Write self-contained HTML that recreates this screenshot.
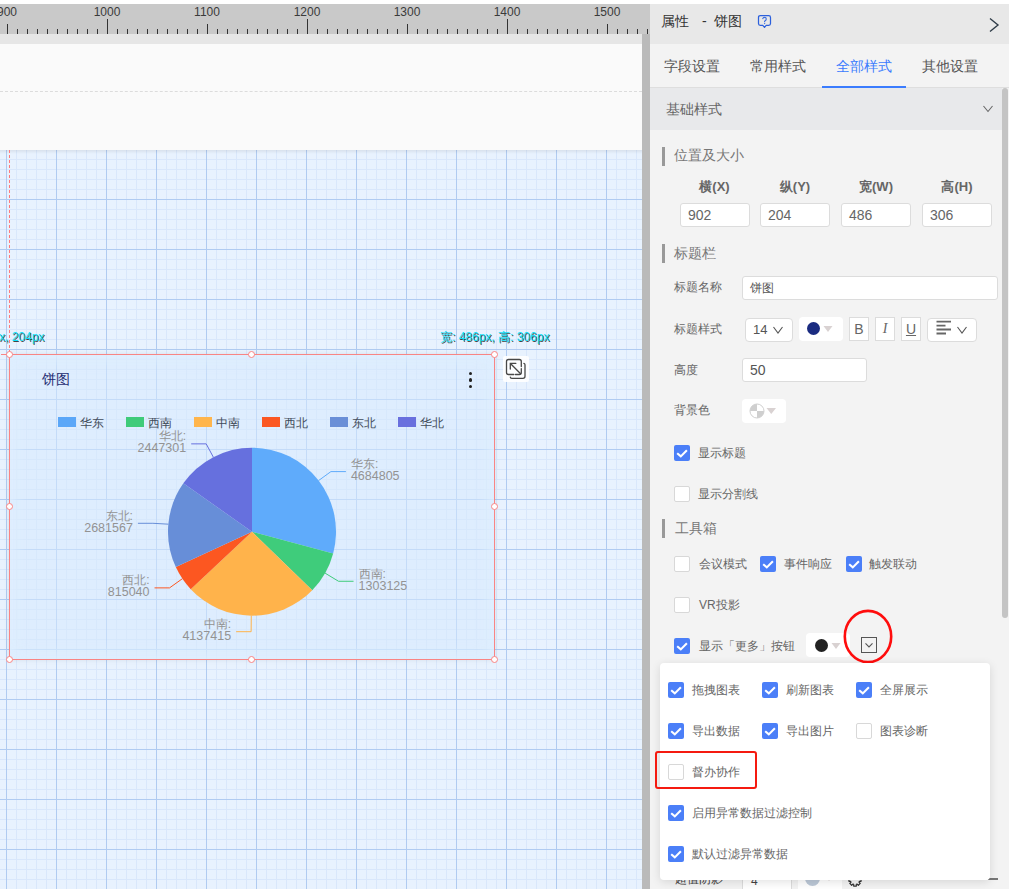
<!DOCTYPE html>
<html><head><meta charset="utf-8">
<style>
*{margin:0;padding:0;box-sizing:border-box}
html,body{width:1009px;height:889px;overflow:hidden;background:#fff;font-family:"Liberation Sans",sans-serif}
.a{position:absolute}
.tk{position:absolute;width:1px;background:#333}
.rl{position:absolute;top:5px;width:60px;text-align:center;font-size:12px;line-height:14px;color:#3a3a3a}
.grid{position:absolute;left:0;top:150px;width:642px;height:739px;background-color:#e8f2fe;
 background-image:
  linear-gradient(to right, #b0cbf1 1px, transparent 1px),
  linear-gradient(to bottom, #b0cbf1 1px, transparent 1px),
  linear-gradient(to right, #d9e7fb 1px, transparent 1px),
  linear-gradient(to bottom, #d9e7fb 1px, transparent 1px);
 background-size:50px 50px,50px 50px,10px 10px,10px 10px;
 background-position:6px -1px,6px -1px,6px -1px,6px -1px}
.pl{position:absolute;font-size:12.5px;line-height:12px;color:#939393;white-space:nowrap}
.lg{position:absolute;top:417px;width:18px;height:10px}
.lt{position:absolute;top:414.5px;font-size:12px;line-height:16px;color:#414b5a}
.cyan{position:absolute;font-size:12px;line-height:14px;color:#12e0fa;text-shadow:1px 1px 0.5px rgba(20,20,20,0.8);white-space:nowrap}
.hd{position:absolute;width:7px;height:7px;border-radius:50%;background:#fff;border:1px solid #f98484}
/* right panel */
.t14{position:absolute;font-size:14px;line-height:16px;color:#555;white-space:nowrap}
.t12{position:absolute;font-size:12px;line-height:14px;color:#666;white-space:nowrap}
.sec{position:absolute;left:662px;width:3px;height:19px;background:#999}
.inp{position:absolute;background:#fff;border:1px solid #dcdcdc;border-radius:3px}
.cb{position:absolute;width:16px;height:16px;border-radius:2px;background:#4b7ff8}
.cb svg{position:absolute;left:0;top:0}
.ucb{position:absolute;width:16px;height:16px;border-radius:2px;background:#fff;border:1px solid #d8d8d8}
</style></head><body>
<!-- top white strip -->
<div class="a" style="left:0;top:0;width:1009px;height:4px;background:#fff"></div>
<!-- ruler -->
<div class="a" style="left:0;top:4px;width:650px;height:30px;background:#c9c9c9;overflow:hidden">
<div class="a" style="left:0;top:-4px;width:650px;height:34px">
<div class="tk" style="left:7px;top:24px;height:10px"></div><div class="tk" style="left:17px;top:29px;height:5px"></div><div class="tk" style="left:27px;top:29px;height:5px"></div><div class="tk" style="left:37px;top:29px;height:5px"></div><div class="tk" style="left:47px;top:29px;height:5px"></div><div class="tk" style="left:57px;top:29px;height:5px"></div><div class="tk" style="left:67px;top:29px;height:5px"></div><div class="tk" style="left:77px;top:29px;height:5px"></div><div class="tk" style="left:87px;top:29px;height:5px"></div><div class="tk" style="left:97px;top:29px;height:5px"></div><div class="tk" style="left:107px;top:19px;height:15px"></div><div class="tk" style="left:117px;top:29px;height:5px"></div><div class="tk" style="left:127px;top:29px;height:5px"></div><div class="tk" style="left:137px;top:29px;height:5px"></div><div class="tk" style="left:147px;top:29px;height:5px"></div><div class="tk" style="left:157px;top:29px;height:5px"></div><div class="tk" style="left:167px;top:29px;height:5px"></div><div class="tk" style="left:177px;top:29px;height:5px"></div><div class="tk" style="left:187px;top:29px;height:5px"></div><div class="tk" style="left:197px;top:29px;height:5px"></div><div class="tk" style="left:207px;top:24px;height:10px"></div><div class="tk" style="left:217px;top:29px;height:5px"></div><div class="tk" style="left:227px;top:29px;height:5px"></div><div class="tk" style="left:237px;top:29px;height:5px"></div><div class="tk" style="left:247px;top:29px;height:5px"></div><div class="tk" style="left:257px;top:29px;height:5px"></div><div class="tk" style="left:267px;top:29px;height:5px"></div><div class="tk" style="left:277px;top:29px;height:5px"></div><div class="tk" style="left:287px;top:29px;height:5px"></div><div class="tk" style="left:297px;top:29px;height:5px"></div><div class="tk" style="left:307px;top:19px;height:15px"></div><div class="tk" style="left:317px;top:29px;height:5px"></div><div class="tk" style="left:327px;top:29px;height:5px"></div><div class="tk" style="left:337px;top:29px;height:5px"></div><div class="tk" style="left:347px;top:29px;height:5px"></div><div class="tk" style="left:357px;top:29px;height:5px"></div><div class="tk" style="left:367px;top:29px;height:5px"></div><div class="tk" style="left:377px;top:29px;height:5px"></div><div class="tk" style="left:387px;top:29px;height:5px"></div><div class="tk" style="left:397px;top:29px;height:5px"></div><div class="tk" style="left:407px;top:24px;height:10px"></div><div class="tk" style="left:417px;top:29px;height:5px"></div><div class="tk" style="left:427px;top:29px;height:5px"></div><div class="tk" style="left:437px;top:29px;height:5px"></div><div class="tk" style="left:447px;top:29px;height:5px"></div><div class="tk" style="left:457px;top:29px;height:5px"></div><div class="tk" style="left:467px;top:29px;height:5px"></div><div class="tk" style="left:477px;top:29px;height:5px"></div><div class="tk" style="left:487px;top:29px;height:5px"></div><div class="tk" style="left:497px;top:29px;height:5px"></div><div class="tk" style="left:507px;top:19px;height:15px"></div><div class="tk" style="left:517px;top:29px;height:5px"></div><div class="tk" style="left:527px;top:29px;height:5px"></div><div class="tk" style="left:537px;top:29px;height:5px"></div><div class="tk" style="left:547px;top:29px;height:5px"></div><div class="tk" style="left:557px;top:29px;height:5px"></div><div class="tk" style="left:567px;top:29px;height:5px"></div><div class="tk" style="left:577px;top:29px;height:5px"></div><div class="tk" style="left:587px;top:29px;height:5px"></div><div class="tk" style="left:597px;top:29px;height:5px"></div><div class="tk" style="left:607px;top:24px;height:10px"></div><div class="tk" style="left:617px;top:29px;height:5px"></div><div class="tk" style="left:627px;top:29px;height:5px"></div><div class="tk" style="left:637px;top:29px;height:5px"></div><div class="tk" style="left:647px;top:29px;height:5px"></div>
<div class="rl" style="left:-23px">900</div><div class="rl" style="left:77px">1000</div><div class="rl" style="left:177px">1100</div><div class="rl" style="left:277px">1200</div><div class="rl" style="left:377px">1300</div><div class="rl" style="left:477px">1400</div><div class="rl" style="left:577px">1500</div>
</div></div>
<div class="a" style="left:0;top:34px;width:642px;height:10px;background:#e6e6e6"></div>
<div class="a" style="left:0;top:44px;width:642px;height:106px;background:#fafafa"></div>
<div class="a" style="left:0;top:91px;width:642px;height:0;border-top:1px dashed #dcdcdc"></div>
<!-- grid -->
<div class="grid"></div>
<div class="a" style="left:0;top:150px;width:642px;height:4px;background:linear-gradient(rgba(0,0,0,0.07),rgba(0,0,0,0))"></div>
<!-- red dashed guide -->
<div class="a" style="left:9px;top:150px;width:1px;height:204px;background:repeating-linear-gradient(to bottom,#ff7b7b 0 3px,transparent 3px 5px)"></div>
<!-- chart -->
<div class="a" style="left:10px;top:355px;width:484px;height:304px;background:rgba(214,234,253,0.55);box-shadow:0 0 6px rgba(0,0,0,0.10), inset 0 0 14px 6px rgba(222,238,254,0.9)"></div>
<div class="a" style="left:1px;top:354px;width:494px;height:1px;background:#f98484"></div>
<div class="a" style="left:9px;top:354px;width:1px;height:306px;background:#f98484"></div>
<div class="a" style="left:494px;top:354px;width:1px;height:306px;background:#f98484"></div>
<div class="a" style="left:9px;top:659px;width:486px;height:1px;background:#f98484"></div>
<div class="hd" style="left:6px;top:351px"></div>
<div class="hd" style="left:248px;top:351px"></div>
<div class="hd" style="left:491px;top:351px"></div>
<div class="hd" style="left:6px;top:503px"></div>
<div class="hd" style="left:491px;top:503px"></div>
<div class="hd" style="left:6px;top:656px"></div>
<div class="hd" style="left:248px;top:656px"></div>
<div class="hd" style="left:491px;top:656px"></div>
<div class="cyan" style="left:-1px;top:330px">x, 204px</div>
<div class="cyan" style="left:440px;top:330px">宽: 486px, 高: 306px</div>
<div class="a" style="left:42px;top:371px;font-size:14px;line-height:16px;color:#1e2c72">饼图</div>
<!-- dots -->
<div class="a" style="left:468.6px;top:371.5px;width:3.6px;height:3.6px;border-radius:50%;background:#222"></div>
<div class="a" style="left:468.6px;top:378.2px;width:3.6px;height:3.6px;border-radius:50%;background:#222"></div>
<div class="a" style="left:468.6px;top:384.7px;width:3.6px;height:3.6px;border-radius:50%;background:#222"></div>
<!-- expand icon -->
<div class="a" style="left:503px;top:356px;width:26px;height:26px;background:rgba(255,255,255,0.88);border-radius:2px">
<svg width="26" height="26" viewBox="0 0 26 26" style="position:absolute;left:0;top:0">
<g fill="none" stroke="#484848" stroke-width="1.3" stroke-linecap="round">
<path d="M10.8 18.5 H5.5 Q3.5 18.5 3.5 16.5 V5.5 Q3.5 3.5 5.5 3.5 H16.3 Q18.3 3.5 18.3 5.5 V10.6"/>
<path d="M18.3 12.6 V16.5 Q18.3 18.5 16.3 18.5 H12.4"/>
<path d="M7.4 7.5 L17.6 17.8 M7.3 13 V7.4 H12.8"/>
<path d="M20.9 7.3 Q22 7.5 22 8.8 V20.3 Q22 22.3 20 22.3 H8.8 Q7.4 22.3 7.3 21.1"/>
</g></svg></div>
<!-- legend -->
<div class="lg" style="left:58px;background:#5ba7f8"></div><div class="lt" style="left:80px">华东</div>
<div class="lg" style="left:126px;background:#3fcb7a"></div><div class="lt" style="left:148px">西南</div>
<div class="lg" style="left:194px;background:#ffb54c"></div><div class="lt" style="left:216px">中南</div>
<div class="lg" style="left:262px;background:#fb5722"></div><div class="lt" style="left:284px">西北</div>
<div class="lg" style="left:330px;background:#6a8fd7"></div><div class="lt" style="left:352px">东北</div>
<div class="lg" style="left:398px;background:#6970de"></div><div class="lt" style="left:420px">华北</div>
<svg class="a" style="left:0;top:0" width="642" height="889" viewBox="0 0 642 889">
<path d="M252,531.7 L252.00,447.70 A84,84 0 0 1 333.16,553.38 Z" fill="#5fabfb"/><polyline points="318.62,480.54 330.91,471.60 345.91,471.60" fill="none" stroke="#5fabfb" stroke-width="1"/><path d="M252,531.7 L333.16,553.38 A84,84 0 0 1 312.27,590.21 Z" fill="#3fcc7b"/><polyline points="325.07,573.13 338.56,581.27 353.56,581.27" fill="none" stroke="#3fcc7b" stroke-width="1"/><path d="M252,531.7 L312.27,590.21 A84,84 0 0 1 190.73,589.16 Z" fill="#ffb34b"/><polyline points="251.28,615.70 251.14,631.70 236.14,631.70" fill="none" stroke="#ffb34b" stroke-width="1"/><path d="M252,531.7 L190.73,589.16 A84,84 0 0 1 175.81,567.07 Z" fill="#fc5721"/><polyline points="182.39,578.71 169.54,587.89 154.54,587.89" fill="none" stroke="#fc5721" stroke-width="1"/><path d="M252,531.7 L175.81,567.07 A84,84 0 0 1 183.34,483.31 Z" fill="#678ed8"/><polyline points="168.34,524.18 152.90,523.29 137.90,523.29" fill="none" stroke="#678ed8" stroke-width="1"/><path d="M252,531.7 L183.34,483.31 A84,84 0 0 1 252.00,447.70 Z" fill="#6670de"/><polyline points="213.33,457.13 206.19,443.87 191.19,443.87" fill="none" stroke="#6670de" stroke-width="1"/>
</svg>
<div class="pl" style="left:350.9px;top:457.9px;text-align:left"><span style="font-size:12px">华东:</span><br>4684805</div><div class="pl" style="left:358.6px;top:567.6px;text-align:left"><span style="font-size:12px">西南:</span><br>1303125</div><div class="pl" style="left:151.1px;top:618.0px;width:80px;text-align:right"><span style="font-size:12px">中南:</span><br>4137415</div><div class="pl" style="left:69.5px;top:574.2px;width:80px;text-align:right"><span style="font-size:12px">西北:</span><br>815040</div><div class="pl" style="left:52.9px;top:509.6px;width:80px;text-align:right"><span style="font-size:12px">东北:</span><br>2681567</div><div class="pl" style="left:106.2px;top:430.2px;width:80px;text-align:right"><span style="font-size:12px">华北:</span><br>2447301</div>
<!-- scrollbar canvas -->
<div class="a" style="left:642px;top:34px;width:8px;height:855px;background:#bababa"></div>
<!--RIGHT-->
<div class="a" style="left:650px;top:4px;width:359px;height:40px;background:#e8e8e8"></div>
<div class="t14" style="left:661px;top:13px;color:#333">属性</div>
<div class="t14" style="left:702px;top:13px;color:#333">-</div>
<div class="t14" style="left:714px;top:13px;color:#333">饼图</div>
<svg class="a" style="left:756px;top:14px" width="17" height="16" viewBox="0 0 17 16"><path d="M4.3 1.6 H12.7 Q14.5 1.6 14.5 3.4 V9.6 Q14.5 11.4 12.7 11.4 H10.2 L8.5 13.4 L6.8 11.4 H4.3 Q2.5 11.4 2.5 9.6 V3.4 Q2.5 1.6 4.3 1.6 Z" fill="none" stroke="#2c60dc" stroke-width="1.25" stroke-linejoin="round"/><path d="M6.6 5.1 Q6.8 3.4 8.5 3.4 Q10.3 3.4 10.3 5 Q10.3 6.2 8.6 7.2 V8.3" fill="none" stroke="#3a6de0" stroke-width="1.1"/><circle cx="8.6" cy="9.6" r="0.7" fill="#3a6de0"/></svg>
<svg class="a" style="left:988px;top:17px" width="12" height="16" viewBox="0 0 12 16"><path d="M2 1.5 L10 8 L2 14.5" fill="none" stroke="#2f3c48" stroke-width="1.4"/></svg>
<div class="a" style="left:650px;top:44px;width:359px;height:43px;background:#f3f3f3"></div>
<div class="a" style="left:650px;top:87px;width:359px;height:1px;background:#dedede"></div>
<div class="t14" style="left:664px;top:58px;color:#555">字段设置</div>
<div class="t14" style="left:750px;top:58px;color:#555">常用样式</div>
<div class="t14" style="left:836px;top:58px;color:#3b7cfe">全部样式</div>
<div class="t14" style="left:922px;top:58px;color:#555">其他设置</div>
<div class="a" style="left:822px;top:86px;width:84px;height:2px;background:#3b7cfe"></div>
<div class="a" style="left:650px;top:88px;width:359px;height:801px;background:#f3f3f3"></div>
<div class="a" style="left:650px;top:88px;width:352px;height:42px;background:#e8e9eb"></div>
<div class="t14" style="left:666px;top:101px;color:#666">基础样式</div>
<svg class="a" style="left:982px;top:103px" width="12" height="12" viewBox="0 0 12 12"><path d="M1.5 3 L6 8.5 L10.5 3" fill="none" stroke="#666" stroke-width="1.1"/></svg>
<div class="a" style="left:1002px;top:88px;width:6px;height:530px;background:#c4c4c4;border-radius:3px"></div>
<div class="sec" style="top:147px"></div>
<div class="t14" style="left:674px;top:147px;color:#777">位置及大小</div>
<div class="a" style="left:674.5px;top:179px;width:80px;text-align:center;font-size:13px;line-height:15px;font-weight:bold;color:#666">横(X)</div>
<div class="a" style="left:755px;top:179px;width:80px;text-align:center;font-size:13px;line-height:15px;font-weight:bold;color:#666">纵(Y)</div>
<div class="a" style="left:836px;top:179px;width:80px;text-align:center;font-size:13px;line-height:15px;font-weight:bold;color:#666">宽(W)</div>
<div class="a" style="left:917px;top:179px;width:80px;text-align:center;font-size:13px;line-height:15px;font-weight:bold;color:#666">高(H)</div>
<div class="inp" style="left:680px;top:203px;width:70px;height:24px"></div>
<div class="t14" style="left:688px;top:207px;color:#666">902</div>
<div class="inp" style="left:760px;top:203px;width:70px;height:24px"></div>
<div class="t14" style="left:768px;top:207px;color:#666">204</div>
<div class="inp" style="left:841px;top:203px;width:70px;height:24px"></div>
<div class="t14" style="left:849px;top:207px;color:#666">486</div>
<div class="inp" style="left:922px;top:203px;width:70px;height:24px"></div>
<div class="t14" style="left:930px;top:207px;color:#666">306</div>
<div class="sec" style="top:244px"></div>
<div class="t14" style="left:674px;top:245px;color:#777">标题栏</div>
<div class="t12" style="left:674px;top:280px">标题名称</div>
<div class="inp" style="left:742px;top:276px;width:256px;height:24px"></div>
<div class="t12" style="left:750px;top:281px;color:#555">饼图</div>
<div class="t12" style="left:674px;top:322px">标题样式</div>
<div class="inp" style="left:745px;top:318px;width:48px;height:24px;border-radius:4px"></div>
<div class="a" style="left:753px;top:322px;font-size:13px;line-height:15px;color:#555">14</div>
<svg class="a" style="left:772px;top:324px" width="12" height="12" viewBox="0 0 12 12"><path d="M1.5 3 L6 9 L10.5 3" fill="none" stroke="#555" stroke-width="1.1"/></svg>
<div class="a" style="left:799px;top:317px;width:44px;height:24px;background:#fff;border-radius:4px"></div>
<div class="a" style="left:807px;top:322px;width:13px;height:13px;border-radius:50%;background:#1a2b80"></div>
<svg class="a" style="left:823px;top:325px" width="10" height="8" viewBox="0 0 10 8"><path d="M0.5 1 L9.5 1 L5 7 Z" fill="#d9d2d2"/></svg>
<div class="a" style="left:849px;top:317px;width:20px;height:24px;background:#fff;border:1px solid #dcdcdc"></div>
<div class="a" style="left:849px;top:321px;width:20px;text-align:center;font-size:14px;line-height:16px;color:#666;font-weight:normal">B</div>
<div class="a" style="left:875px;top:317px;width:20px;height:24px;background:#fff;border:1px solid #dcdcdc"></div>
<div class="a" style="left:875px;top:321px;width:20px;text-align:center;font-size:14px;line-height:16px;color:#666;font-style:italic;font-family:Liberation Serif,serif">I</div>
<div class="a" style="left:901px;top:317px;width:20px;height:24px;background:#fff;border:1px solid #dcdcdc"></div>
<div class="a" style="left:901px;top:321px;width:20px;text-align:center;font-size:14px;line-height:16px;color:#666;text-decoration:underline">U</div>
<div class="inp" style="left:927px;top:318px;width:50px;height:24px;border-radius:4px"></div>
<svg class="a" style="left:936px;top:320px" width="16" height="16" viewBox="0 0 16 16"><path d="M0.5 1.7 H15 M0.5 5.6 H9.5 M0.5 9.5 H15 M0.5 13.5 H10" fill="none" stroke="#666" stroke-width="1.8"/></svg>
<svg class="a" style="left:956px;top:324px" width="12" height="12" viewBox="0 0 12 12"><path d="M1.5 3 L6 9 L10.5 3" fill="none" stroke="#555" stroke-width="1.1"/></svg>
<div class="t12" style="left:674px;top:363px">高度</div>
<div class="inp" style="left:742px;top:358px;width:125px;height:24px"></div>
<div class="t14" style="left:750px;top:362px;color:#555">50</div>
<div class="t12" style="left:674px;top:403px">背景色</div>
<div class="a" style="left:742px;top:399px;width:44px;height:24px;background:#fff;border-radius:4px"></div>
<svg class="a" style="left:748.5px;top:403px" width="16" height="16" viewBox="0 0 16 16"><circle cx="8" cy="8" r="7" fill="#fff" stroke="#d0d0d0" stroke-width="1"/><path d="M8 8 V1 A7 7 0 0 0 1 8 Z M8 8 V15 A7 7 0 0 0 15 8 Z" fill="#cfcfcf"/></svg>
<svg class="a" style="left:766px;top:407px" width="11" height="8" viewBox="0 0 11 8"><path d="M0.5 1 L10 1 L5.25 7 Z" fill="#d9d2d2"/></svg>
<div class="cb" style="left:674px;top:445px"><svg width="16" height="16" viewBox="0 0 16 16"><path d="M3.2 8.2 L6.8 11.4 L12.9 5.3" fill="none" stroke="#fff" stroke-width="2.1"/></svg></div>
<div class="t12" style="left:698px;top:446px">显示标题</div>
<div class="ucb" style="left:674px;top:486px"></div>
<div class="t12" style="left:698px;top:487px">显示分割线</div>
<div class="sec" style="top:519px"></div>
<div class="t14" style="left:675px;top:520px;color:#777">工具箱</div>
<div class="ucb" style="left:674px;top:556px"></div>
<div class="t12" style="left:699px;top:557px">会议模式</div>
<div class="cb" style="left:760px;top:556px"><svg width="16" height="16" viewBox="0 0 16 16"><path d="M3.2 8.2 L6.8 11.4 L12.9 5.3" fill="none" stroke="#fff" stroke-width="2.1"/></svg></div>
<div class="t12" style="left:784px;top:557px">事件响应</div>
<div class="cb" style="left:846px;top:556px"><svg width="16" height="16" viewBox="0 0 16 16"><path d="M3.2 8.2 L6.8 11.4 L12.9 5.3" fill="none" stroke="#fff" stroke-width="2.1"/></svg></div>
<div class="t12" style="left:869px;top:557px">触发联动</div>
<div class="ucb" style="left:674px;top:597px"></div>
<div class="t12" style="left:699px;top:598px">VR投影</div>
<div class="cb" style="left:674px;top:638px"><svg width="16" height="16" viewBox="0 0 16 16"><path d="M3.2 8.2 L6.8 11.4 L12.9 5.3" fill="none" stroke="#fff" stroke-width="2.1"/></svg></div>
<div class="t12" style="left:699px;top:639px">显示「更多」按钮</div>
<div class="a" style="left:806px;top:633px;width:44px;height:24px;background:#fff;border-radius:4px"></div>
<div class="a" style="left:815px;top:639px;width:13px;height:13px;border-radius:50%;background:#222"></div>
<svg class="a" style="left:831px;top:642px" width="10" height="8" viewBox="0 0 10 8"><path d="M0.5 1 L9.5 1 L5 7 Z" fill="#d9d2d2"/></svg>
<div class="a" style="left:861px;top:637px;width:16px;height:16px;border:1.6px solid #555"></div>
<svg class="a" style="left:861px;top:637px" width="16" height="16" viewBox="0 0 16 16"><path d="M4.5 6.3 L8 10 L11.5 6.3" fill="none" stroke="#555" stroke-width="1.1"/></svg>
<svg class="a" style="left:840px;top:606px" width="56" height="60" viewBox="0 0 56 60"><ellipse cx="28" cy="30.5" rx="23.2" ry="25.6" fill="none" stroke="#ff0d0d" stroke-width="2.6"/></svg>
<div class="t12" style="left:675px;top:872px;color:#444">超值阴影</div>
<div class="inp" style="left:742px;top:868px;width:50px;height:24px"></div>
<div class="t12" style="left:751px;top:874px;color:#444">4</div>
<div class="a" style="left:798px;top:868px;width:44px;height:24px;background:#fff;border-radius:4px"></div>
<div class="a" style="left:805px;top:871px;width:15px;height:15px;border-radius:50%;background:#bcc8d7"></div>
<svg class="a" style="left:848px;top:873px" width="14" height="14" viewBox="0 0 14 14"><path d="M11.41 5.70 L13.05 5.65 L13.05 8.35 L11.41 8.30 L11.04 9.20 L12.24 10.32 L10.32 12.24 L9.20 11.04 L8.30 11.41 L8.35 13.05 L5.65 13.05 L5.70 11.41 L4.80 11.04 L3.68 12.24 L1.76 10.32 L2.96 9.20 L2.59 8.30 L0.95 8.35 L0.95 5.65 L2.59 5.70 L2.96 4.80 L1.76 3.68 L3.68 1.76 L4.80 2.96 L5.70 2.59 L5.65 0.95 L8.35 0.95 L8.30 2.59 L9.20 2.96 L10.32 1.76 L12.24 3.68 L11.04 4.80 Z" fill="none" stroke="#333" stroke-width="1.2" stroke-linejoin="round"/></svg>
<div class="a" style="left:988px;top:878px;width:10px;height:2px;background:#777"></div>
<svg class="a" style="left:825px;top:876px" width="8" height="6" viewBox="0 0 8 6"><path d="M0.5 0.5 L7.5 0.5 L4 5 Z" fill="#d9d2d2"/></svg>
<div class="a" style="left:660px;top:663px;width:330px;height:217px;background:#fff;border-radius:4px;box-shadow:0 2px 10px rgba(0,0,0,0.12)"></div>
<div class="cb" style="left:668px;top:682px"><svg width="16" height="16" viewBox="0 0 16 16"><path d="M3.2 8.2 L6.8 11.4 L12.9 5.3" fill="none" stroke="#fff" stroke-width="2.1"/></svg></div>
<div class="t12" style="left:692px;top:683px">拖拽图表</div>
<div class="cb" style="left:762px;top:682px"><svg width="16" height="16" viewBox="0 0 16 16"><path d="M3.2 8.2 L6.8 11.4 L12.9 5.3" fill="none" stroke="#fff" stroke-width="2.1"/></svg></div>
<div class="t12" style="left:786px;top:683px">刷新图表</div>
<div class="cb" style="left:856px;top:682px"><svg width="16" height="16" viewBox="0 0 16 16"><path d="M3.2 8.2 L6.8 11.4 L12.9 5.3" fill="none" stroke="#fff" stroke-width="2.1"/></svg></div>
<div class="t12" style="left:880px;top:683px">全屏展示</div>
<div class="cb" style="left:668px;top:723px"><svg width="16" height="16" viewBox="0 0 16 16"><path d="M3.2 8.2 L6.8 11.4 L12.9 5.3" fill="none" stroke="#fff" stroke-width="2.1"/></svg></div>
<div class="t12" style="left:692px;top:724px">导出数据</div>
<div class="cb" style="left:762px;top:723px"><svg width="16" height="16" viewBox="0 0 16 16"><path d="M3.2 8.2 L6.8 11.4 L12.9 5.3" fill="none" stroke="#fff" stroke-width="2.1"/></svg></div>
<div class="t12" style="left:786px;top:724px">导出图片</div>
<div class="ucb" style="left:856px;top:723px"></div>
<div class="t12" style="left:880px;top:724px">图表诊断</div>
<div class="ucb" style="left:668px;top:764px"></div>
<div class="t12" style="left:692px;top:765px">督办协作</div>
<div class="cb" style="left:668px;top:805px"><svg width="16" height="16" viewBox="0 0 16 16"><path d="M3.2 8.2 L6.8 11.4 L12.9 5.3" fill="none" stroke="#fff" stroke-width="2.1"/></svg></div>
<div class="t12" style="left:692px;top:806px">启用异常数据过滤控制</div>
<div class="cb" style="left:668px;top:846px"><svg width="16" height="16" viewBox="0 0 16 16"><path d="M3.2 8.2 L6.8 11.4 L12.9 5.3" fill="none" stroke="#fff" stroke-width="2.1"/></svg></div>
<div class="t12" style="left:692px;top:847px">默认过滤异常数据</div>
<div class="a" style="left:655px;top:751px;width:102px;height:38px;border:2.4px solid #f51a10;border-radius:3px"></div>
</body></html>
